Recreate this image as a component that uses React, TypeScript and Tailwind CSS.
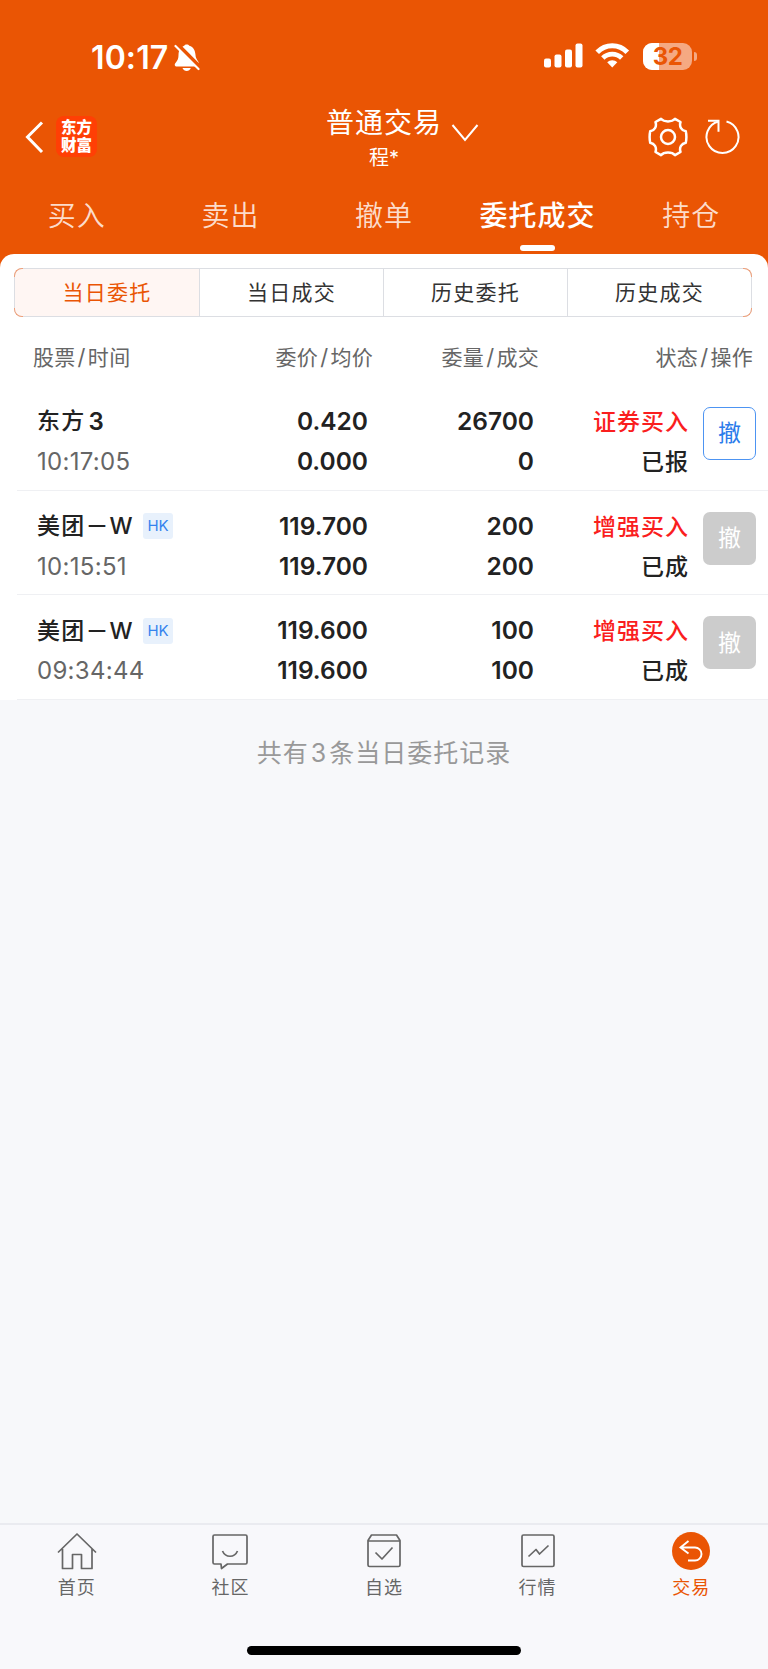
import React from 'react'

const tabs = ['买入', '卖出', '撤单', '委托成交', '持仓']
const segments = ['当日委托', '当日成交', '历史委托', '历史成交']

const orders = [
  { name: '东方', suffix: '3', hk: false, time: '10:17:05', price: '0.420', avg: '0.000', qty: '26700', filled: '0', side: '证券买入', status: '已报', open: true },
  { name: '美团－W', suffix: '', hk: true, time: '10:15:51', price: '119.700', avg: '119.700', qty: '200', filled: '200', side: '增强买入', status: '已成', open: false },
  { name: '美团－W', suffix: '', hk: true, time: '09:34:44', price: '119.600', avg: '119.600', qty: '100', filled: '100', side: '增强买入', status: '已成', open: false },
]

const StatusBar = () => {
  return (
    <div className="flex h-[100px] items-start justify-between pl-[91px] pr-[71px] pt-[42px]">
      <div className="flex h-[30px] items-center">
        <span className="w-[83px] whitespace-nowrap pt-[1px] text-[32px] font-semibold leading-[30px] tracking-[0.1px]">10:17</span>
        <svg width="26" height="28" viewBox="0 0 26 28" fill="none">
          <path d="M7 5C8.500 3.500 9.500 3 10.200 2.700C11 1.200 14.500 1.200 15.300 2.700C19.500 4 21.300 7.500 21.500 12C21.600 14.500 22.500 16 24.500 19L25 23.500H3C0.500 23.500 0.200 21.500 1.500 20C3.800 17.500 4.500 15 4.500 12C4.500 9 5 7 7 5Z" fill="white" />
          <path d="M8.500 25H16.800C15.500 29 9.800 29 8.500 25Z" fill="white" />
          <path d="M3 1L26 24" stroke="#EA5504" strokeWidth="4" />
          <path d="M1.500 3L24.500 26" stroke="white" strokeWidth="2.200" strokeLinecap="round" />
        </svg>
      </div>
      <div className="flex h-[28px] items-center">
        <svg width="39" height="26" viewBox="0 0 39 26" fill="white">
          <rect x="0" y="15.500" width="7" height="9" rx="2" />
          <rect x="10.500" y="11.500" width="7" height="13" rx="2" />
          <rect x="21" y="6.500" width="7" height="18" rx="2" />
          <rect x="31.500" y="0.500" width="7" height="24" rx="2" />
        </svg>
        <svg className="ml-[12px]" width="35" height="26" viewBox="0 0 35 26" fill="none" stroke="white">
          <path d="M2.200 9.300C10.500 0.600 24 0.600 32.300 9.300" strokeWidth="5" />
          <path d="M7.800 15C13.200 9.700 21.300 9.700 26.700 15" strokeWidth="4.800" />
          <path d="M17.250 24.500L12.200 19.300C15 16.600 19.500 16.600 22.300 19.300Z" fill="white" stroke="none" />
        </svg>
        <div className="relative ml-[13px] flex h-[27px] w-[49px] items-center justify-center overflow-hidden rounded-[9px] bg-[#F5A982]">
          <div className="absolute inset-y-0 left-0 w-[16px] bg-white" />
          <span className="relative text-[24px] font-bold leading-[27px] tracking-[-0.5px] text-[#EA5504]">32</span>
        </div>
        <div className="ml-[2px] h-[9px] w-[3px] rounded-r-full bg-[#F5A982]" />
      </div>
    </div>
  )
}

const NavHeader = () => {
  return (
    <div className="flex h-[82px] items-start pl-[25px] pr-[28px]">
      <div className="flex w-[301px] shrink-0 items-center pt-[16px]">
        <svg width="20" height="32" viewBox="0 0 20 32" fill="none" stroke="white" strokeWidth="3">
          <path d="M17 1.500L2.500 16L17 31" />
        </svg>
        <div className="ml-[11px] flex h-[41px] w-[41px] flex-col items-center justify-center rounded-[8px] bg-[#FF3F05] text-[15.500px] font-black leading-[17.500px]">
          <span>东方</span>
          <span>财富</span>
        </div>
      </div>
      <div className="flex items-start whitespace-nowrap">
        <div className="flex flex-col items-center pt-[5px]">
          <span className="text-[28px] leading-[36px] tracking-[1px]">普通交易</span>
          <span className="text-[20px] leading-[34px]">程*</span>
        </div>
        <svg className="ml-[9px] mt-[24px]" width="28" height="18" viewBox="0 0 28 18" fill="none" stroke="white" strokeWidth="2">
          <path d="M1.500 1L14 16L26.500 1" />
        </svg>
      </div>
      <div className="flex flex-1 justify-end gap-[16px] pt-[17px]">
        <svg width="40" height="40" viewBox="0 0 40 40" fill="none" stroke="white" strokeWidth="2.500" strokeLinejoin="round">
          <path d="M13 1.800C16 5.300 24 5.300 27 1.800L32.500 5C31 9.500 33.500 13.500 37.800 14.300Q39 20 37.800 25.700C33.500 26.500 31 30.500 32.500 35L27 38.200C24 34.700 16 34.700 13 38.200L7.500 35C9 30.500 6.500 26.500 2.200 25.700Q1 20 2.200 14.300C6.500 13.500 9 9.500 7.500 5Z" />
          <circle cx="20" cy="20" r="7" />
        </svg>
        <svg width="36" height="40" viewBox="0 0 36 40" fill="none" stroke="white" strokeWidth="2">
          <path d="M22.500 4.500A16 16 0 1 1 14.500 4.500" />
          <path d="M4 3.700H14.500V14.700" />
        </svg>
      </div>
    </div>
  )
}

const Tabs = () => {
  return (
    <div className="grid h-[72px] grid-cols-5">
      {tabs.map((tab) => (
        <div key={tab} className="flex flex-col items-center pt-[16px]">
          {tab === '委托成交' ? (
            <>
              <span className="text-[28px] font-medium leading-[36px] tracking-[1px]">{tab}</span>
              <div className="mt-[11px] h-[6px] w-[35px] rounded-full bg-white" />
            </>
          ) : (
            <span className="text-[28px] font-[350] leading-[36px] tracking-[1px] text-[#FCDCCB]">{tab}</span>
          )}
        </div>
      ))}
    </div>
  )
}

const Segments = () => {
  return (
    <div className="relative mx-[14px] w-[738px]">
      <div className="grid h-[49px] grid-cols-4 overflow-hidden rounded-[8px] border border-[#DCDEE3] text-[21px] tracking-[1.300px] text-[#333]">
        {segments.map((item, i) => (
          <div key={item} className={i === 0 ? 'flex items-center justify-center bg-[#FFF6F3] text-[#EA5504]' : 'flex items-center justify-center border-l border-[#DCDEE3]'}>
            {item}
          </div>
        ))}
      </div>
      {/* orange corners */}
      <span className="absolute left-0 top-0 h-[9px] w-[9px] rounded-tl-[8px] border-l border-t border-[#EFA07A]" />
      <span className="absolute bottom-0 left-0 h-[9px] w-[9px] rounded-bl-[8px] border-b border-l border-[#EFA07A]" />
      <span className="absolute right-0 top-0 h-[9px] w-[9px] rounded-tr-[8px] border-r border-t border-[#EFA07A]" />
      <span className="absolute bottom-0 right-0 h-[9px] w-[9px] rounded-br-[8px] border-b border-r border-[#EFA07A]" />
    </div>
  )
}

const Pair = ({ a, b }: { a: string; b: string }) => {
  return (
    <span className="whitespace-nowrap">
      {a}
      <span className="mx-[2px] text-[22px]">/</span>
      {b}
    </span>
  )
}

const OrderRow = ({ order }: { order: (typeof orders)[number] }) => {
  return (
    <div className="ml-[17px] flex h-[104.700px] border-b border-[#EFF0F3] pl-[20px] pr-[12px] pt-[15px] text-[#222]">
      <div className="w-[150px]">
        <div className="flex h-[40px] items-center whitespace-nowrap pt-[1px] text-[23px] font-medium tracking-[1.200px]">
          {order.name}
          {order.suffix && <span className="ml-[3px] text-[24px] font-semibold">{order.suffix}</span>}
          {order.hk && (
            <span className="ml-[9px] flex h-[26px] w-[30px] items-center justify-center rounded-[3px] bg-[#E8F1FC] text-[15px] font-normal tracking-[-0.2px] text-[#3583EE]">HK</span>
          )}
        </div>
        <div className="flex h-[40px] items-center pt-[2px] text-[24px] tracking-[0.300px] text-[#666]">{order.time}</div>
      </div>
      <div className="w-[181px] text-right text-[24.500px] font-semibold leading-[40px]">
        <div>{order.price}</div>
        <div>{order.avg}</div>
      </div>
      <div className="w-[166px] text-right text-[24.500px] font-semibold leading-[40px]">
        <div>{order.qty}</div>
        <div>{order.filled}</div>
      </div>
      <div className="w-[155px] pt-[1px] text-right text-[23px] font-medium leading-[40px] tracking-[1px]">
        <div className="text-[#FA1E1E]">{order.side}</div>
        <div>{order.status}</div>
      </div>
      {order.open ? (
        <button className="ml-auto mt-[6px] h-[53px] w-[53px] rounded-[7px] border border-[#4D94F2] text-[23px] text-[#2B7CEB]">撤</button>
      ) : (
        <button className="ml-auto mt-[6px] h-[53px] w-[53px] rounded-[7px] bg-[#CCCCCC] text-[23px] text-white">撤</button>
      )}
    </div>
  )
}

const BottomNav = () => {
  return (
    <div className="flex h-[146px] flex-col items-center border-t-2 border-[#EAEBF0] bg-[#F8F8FB] text-[#666]">
      <div className="grid w-full grid-cols-5 pt-[6px] text-[18px] leading-[26px] tracking-[1px]">
        <div className="flex flex-col items-center">
          <svg width="40" height="40" viewBox="0 0 40 40" fill="none" stroke="#666" strokeWidth="1.700" strokeLinejoin="round">
            <path d="M1 21.500L20 3L39 21.500M5.500 18V37.500H15.500V23.500H24.500V37.500H35V18" />
          </svg>
          <span className="mt-[4px]">首页</span>
        </div>
        <div className="flex flex-col items-center">
          <svg width="40" height="40" viewBox="0 0 40 40" fill="none" stroke="#666" strokeWidth="1.700" strokeLinejoin="round">
            <path d="M4.500 4H35.500Q37 4 37 5.500V31.500Q37 33 35.500 33H17.500L11.500 37.500L11 33H4.500Q3 33 3 31.500V5.500Q3 4 4.500 4Z" />
            <path d="M12.500 20C15.500 27 24.500 27 27.500 20" />
          </svg>
          <span className="mt-[4px]">社区</span>
        </div>
        <div className="flex flex-col items-center">
          <svg width="40" height="40" viewBox="0 0 40 40" fill="none" stroke="#666" strokeWidth="1.700" strokeLinejoin="round">
            <path d="M7.500 4H32.500L36 9.500V34Q36 35.500 34.500 35.500H5.500Q4 35.500 4 34V9.500ZM4 10H36" />
            <path d="M11.500 21.500L18 28L28.500 16.500" />
          </svg>
          <span className="mt-[4px]">自选</span>
        </div>
        <div className="flex flex-col items-center">
          <svg width="40" height="40" viewBox="0 0 40 40" fill="none" stroke="#666" strokeWidth="1.700" strokeLinejoin="round">
            <rect x="4" y="4" width="32" height="31.500" rx="1.500" />
            <path d="M10.500 25.500L18 18.500L21.500 23L30.500 14.500" />
          </svg>
          <span className="mt-[4px]">行情</span>
        </div>
        <div className="flex flex-col items-center text-[#EA5504]">
          <svg width="40" height="40" viewBox="0 0 40 40" fill="none">
            <circle cx="20" cy="20" r="19" fill="#EA5504" />
            <path d="M17.500 10L9.500 16.500L17.500 22.500M9.500 16.500H24A6.500 6.500 0 0 1 24 29.500H17" stroke="white" strokeWidth="1.900" />
          </svg>
          <span className="mt-[4px]">交易</span>
        </div>
      </div>
      <div className="mt-[45px] h-[9px] w-[274px] rounded-full bg-black" />
    </div>
  )
}

const App = () => {
  return (
    <div lang="zh-CN" className="flex h-[1669px] w-[768px] flex-col overflow-hidden bg-[#F7F8FA] font-['Inter','Noto_Sans_CJK_SC',sans-serif]">
      <div className="bg-[#EA5504] text-white">
        <StatusBar />
        <NavHeader />
        <Tabs />
        <div className="h-[14px] rounded-t-[14px] bg-white" />
      </div>

      <div className="bg-white">
        <Segments />

        <div className="flex h-[69px] items-center pl-[33px] pr-[15px] pt-[12px] text-[21px] tracking-[0.300px] text-[#666]">
          <div className="w-[140px]"><Pair a="股票" b="时间" /></div>
          <div className="w-[200px] text-right"><Pair a="委价" b="均价" /></div>
          <div className="w-[166px] text-right"><Pair a="委量" b="成交" /></div>
          <div className="flex-1 text-right"><Pair a="状态" b="操作" /></div>
        </div>

        {orders.map((order) => (
          <OrderRow key={order.time} order={order} />
        ))}
      </div>

      <div className="flex-1 pt-[34px] text-center text-[25px] leading-[38px] tracking-[1px] text-[#999]">
        共有<span className="mx-[2px]">3</span>条当日委托记录
      </div>

      <BottomNav />
    </div>
  )
}

export default App
